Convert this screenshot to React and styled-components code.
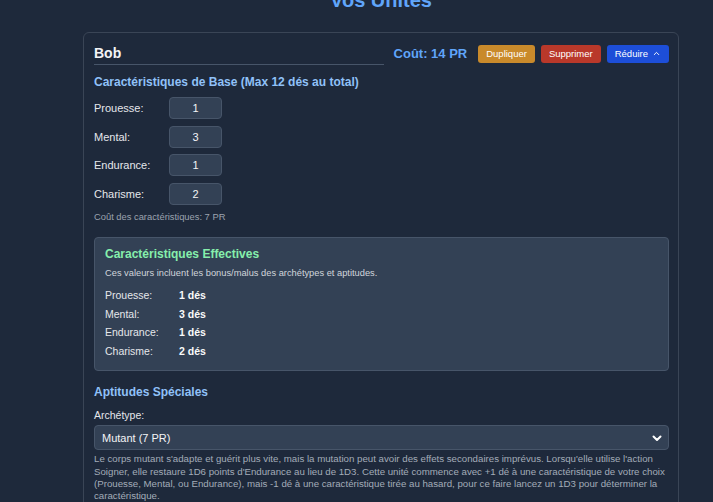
import React from "react";
import styled, { createGlobalStyle } from "styled-components";

const GlobalStyle = createGlobalStyle`
  html, body {
    margin: 0;
    padding: 0;
    background-color: #1e293b;
    font-family: "Liberation Sans", Arial, sans-serif;
    color: #e5e7eb;
    overflow: hidden;
  }
`;

const baseStats = [
  { label: "Prouesse:", value: 1 },
  { label: "Mental:", value: 3 },
  { label: "Endurance:", value: 1 },
  { label: "Charisme:", value: 2 },
];

const App = () => {
  return (
    <Page>
      <GlobalStyle />
      <Title>Vos Unités</Title>
      <Card>
        <Header>
          <NameInput value="Bob" readOnly />
          <Actions>
            <Cost>Coût: 14 PR</Cost>
            <ActionButton $color="#c98a2b">Dupliquer</ActionButton>
            <ActionButton $color="#b9382a">Supprimer</ActionButton>
            <ActionButton $color="#1d4ed8">
              Réduire
              <svg width="9" height="9" viewBox="0 0 24 24" fill="none" stroke="currentColor" strokeWidth="2.5" strokeLinecap="round" strokeLinejoin="round">
                <path d="M6 15l6-6 6 6" />
              </svg>
            </ActionButton>
          </Actions>
        </Header>

        <SectionTitle>Caractéristiques de Base (Max 12 dés au total)</SectionTitle>
        <StatList>
          {baseStats.map((s) => (
            <StatRow key={s.label}>
              <StatLabel>{s.label}</StatLabel>
              <StatInput value={s.value} readOnly />
            </StatRow>
          ))}
        </StatList>
        <Note>Coût des caractéristiques: 7 PR</Note>

        <EffectiveBox>
          <SectionTitle $color="#86efac">Caractéristiques Effectives</SectionTitle>
          <BoxText>Ces valeurs incluent les bonus/malus des archétypes et aptitudes.</BoxText>
          <EffectiveGrid>
            {baseStats.map((s) => (
              <React.Fragment key={s.label}>
                <span>{s.label}</span>
                <strong>{s.value} dés</strong>
              </React.Fragment>
            ))}
          </EffectiveGrid>
        </EffectiveBox>

        <SectionTitle $spaced>Aptitudes Spéciales</SectionTitle>
        <FieldLabel>Archétype:</FieldLabel>
        <SelectWrap>
          <Select defaultValue="mutant">
            <option value="mutant">Mutant (7 PR)</option>
          </Select>
          <svg width="12" height="12" viewBox="0 0 24 24" fill="none" stroke="#ffffff" strokeWidth="4" strokeLinecap="round" strokeLinejoin="round">
            <path d="M5 9l7 7 7-7" />
          </svg>
        </SelectWrap>
        <Description>
          Le corps mutant s'adapte et guérit plus vite, mais la mutation peut avoir des effets secondaires imprévus. Lorsqu'elle utilise l'action
          Soigner, elle restaure 1D6 points d'Endurance au lieu de 1D3. Cette unité commence avec +1 dé à une caractéristique de votre choix
          (Prouesse, Mental, ou Endurance), mais -1 dé à une caractéristique tirée au hasard, pour ce faire lancez un 1D3 pour déterminer la
          caractéristique.
        </Description>
      </Card>
    </Page>
  );
};

export default App;

const Page = styled.div`
  padding: 0 34px 0 83px;
`;

const Title = styled.h1`
  margin: -12px 0 20px;
  text-align: center;
  font-size: 20px;
  line-height: 24px;
  font-weight: 700;
  color: #60a5fa;
`;

const Card = styled.div`
  border: 1px solid #3a4556;
  border-radius: 6px;
  padding: 9px 9px 10px 10px;
  background-color: #1e293b;
`;

const Header = styled.div`
  display: flex;
  align-items: center;
  justify-content: space-between;
`;

const NameInput = styled.input`
  width: 290px;
  height: 23px;
  box-sizing: border-box;
  padding: 0;
  border: none;
  border-bottom: 1px solid #475569;
  background: transparent;
  color: #f3f4f6;
  font-family: inherit;
  font-size: 14px;
  font-weight: 700;
  outline: none;
`;

const Actions = styled.div`
  display: flex;
  align-items: center;
  gap: 6px;
`;

const Cost = styled.span`
  font-size: 13px;
  font-weight: 700;
  color: #60a5fa;
  margin-right: 5px;
`;

const ActionButton = styled.button`
  display: flex;
  align-items: center;
  gap: 4px;
  height: 18px;
  padding: 0 8px;
  border: none;
  border-radius: 3px;
  background-color: ${({ $color }) => $color};
  color: #ffffff;
  font-family: inherit;
  font-size: 9.5px;
  cursor: pointer;
`;

const SectionTitle = styled.h3`
  margin: ${({ $spaced }) => ($spaced ? "14px 0 0" : "10px 0 0")};
  font-size: 12px;
  line-height: 14px;
  font-weight: 700;
  color: ${({ $color }) => $color || "#90c1f8"};
`;

const StatList = styled.div`
  display: flex;
  flex-direction: column;
  gap: 6.7px;
  margin-top: 8px;
`;

const StatRow = styled.div`
  display: flex;
  align-items: center;
`;

const StatLabel = styled.label`
  width: 75px;
  font-size: 11px;
  color: #e5e7eb;
`;

const StatInput = styled.input`
  width: 53px;
  height: 22px;
  box-sizing: border-box;
  border: 1px solid #475569;
  border-radius: 4px;
  background-color: #334155;
  color: #f3f4f6;
  font-family: inherit;
  font-size: 11px;
  text-align: center;
  outline: none;
`;

const Note = styled.p`
  margin: 7px 0 0;
  font-size: 9.35px;
  line-height: 11px;
  color: #9ca3af;
`;

const EffectiveBox = styled.div`
  margin-top: 14px;
  padding: 0 10px 12px;
  border: 1px solid #475569;
  border-radius: 4px;
  background-color: #334155;

  h3 {
    margin-top: 9px;
  }
`;

const BoxText = styled.p`
  margin: 7px 0 0;
  font-size: 9.3px;
  line-height: 11px;
  color: #d1d5db;
`;

const EffectiveGrid = styled.div`
  display: grid;
  grid-template-columns: 74px auto;
  row-gap: 5.7px;
  margin-top: 10px;
  font-size: 10.5px;
  line-height: 13px;
  color: #e5e7eb;

  strong {
    font-weight: 700;
    color: #f9fafb;
  }
`;

const FieldLabel = styled.label`
  display: block;
  margin-top: 10px;
  font-size: 10.5px;
  line-height: 13px;
  color: #e5e7eb;
`;

const SelectWrap = styled.div`
  position: relative;
  margin-top: 3px;

  svg {
    position: absolute;
    right: 6px;
    top: 7px;
    pointer-events: none;
  }
`;

const Select = styled.select`
  appearance: none;
  display: block;
  width: 100%;
  height: 25px;
  padding: 0 7px;
  border: 1px solid #475569;
  border-radius: 4px;
  background-color: #334155;
  color: #f3f4f6;
  font-family: inherit;
  font-size: 11px;
  outline: none;
`;

const Description = styled.p`
  margin: 3px 0 0;
  font-size: 9.7px;
  line-height: 12.4px;
  color: #a3acb9;
`;
